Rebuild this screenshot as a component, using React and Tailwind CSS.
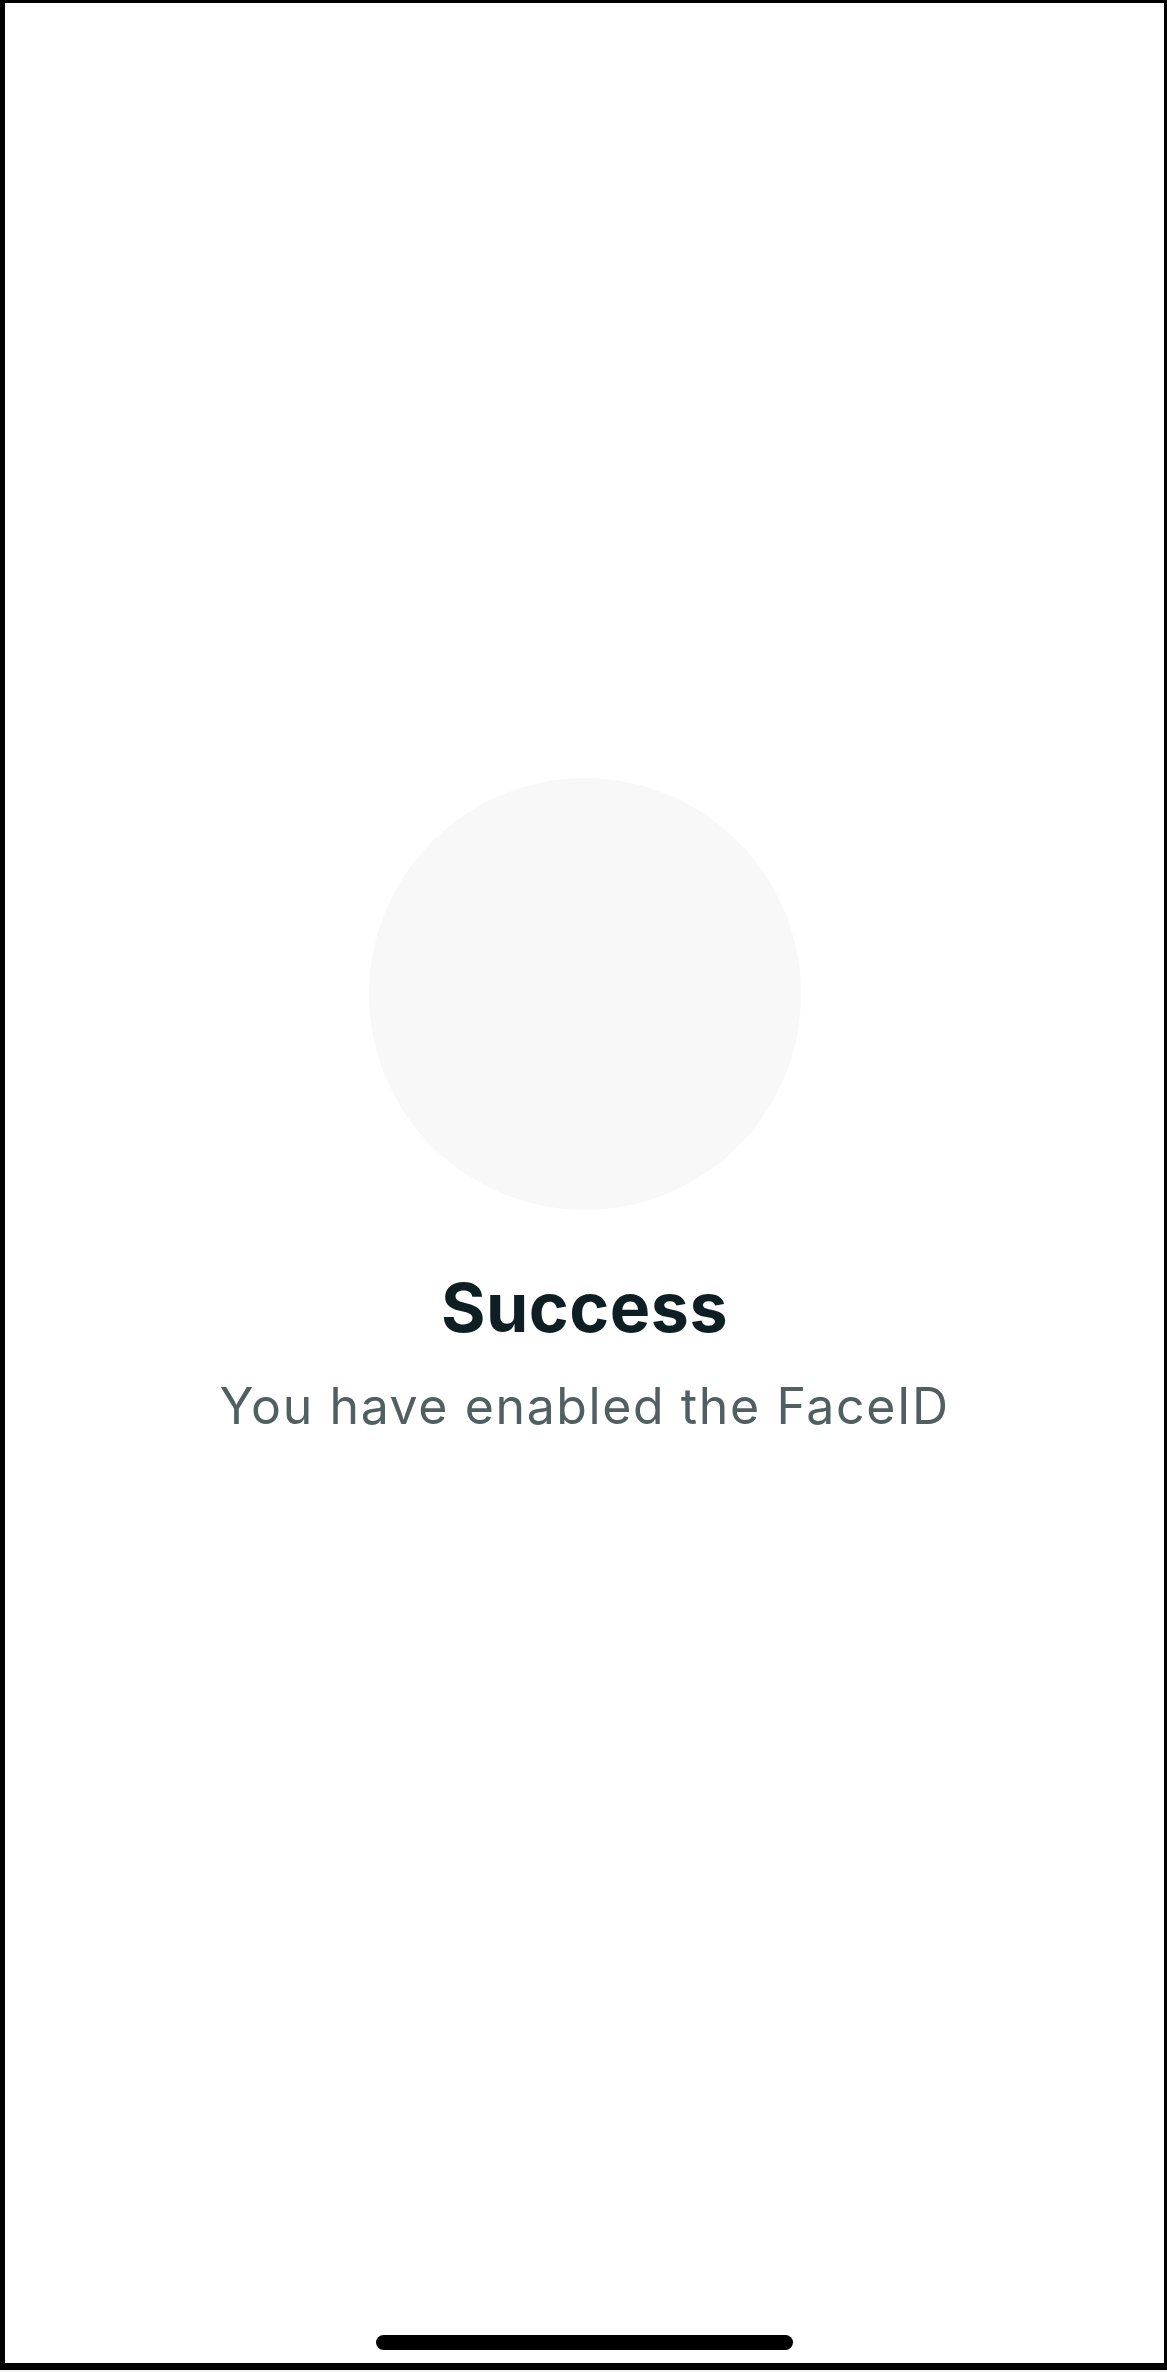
export default function App() {
  return (
    <div className="w-[1167px] h-[2372px] bg-[#f3f3f3]">
      <div className="h-[2370px] border-black border-t-[3px] border-l-[5px] border-r-[3px] border-b-[7px] bg-white flex flex-col items-center font-['Inter',sans-serif]">
        <div className="mt-[775px] w-[432px] h-[432px] rounded-full bg-[#f8f8f8]" />
        <h1 className="mt-[57px] text-[68px] leading-[80px] font-bold text-[#0d1f23] tracking-[0.5px]">
          Success
        </h1>
        <p className="mt-[29px] text-[50px] leading-[60px] text-[#505f60] tracking-[1.6px]">
          You have enabled the FaceID
        </p>
        <div className="mt-auto mb-[13px] w-[417px] h-[15px] rounded-full bg-black" />
      </div>
    </div>
  );
}
